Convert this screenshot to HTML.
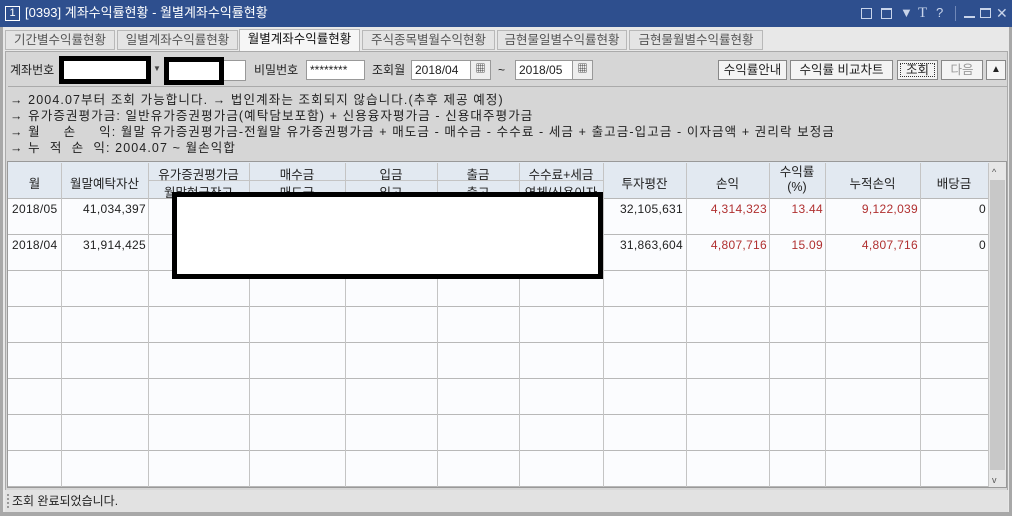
<!DOCTYPE html><html><head><meta charset="utf-8"><style>
*{margin:0;padding:0;box-sizing:border-box}
body{width:1012px;height:516px;overflow:hidden;background:#a8a8a8;font-family:"Liberation Sans","Noto Sans CJK KR",sans-serif;font-size:12px;color:#222;position:relative}
.a{position:absolute}
.t{white-space:nowrap;line-height:14px}
.ic{position:absolute;top:6px;color:#c8d4ea;font-size:13px;line-height:14px;white-space:nowrap}
.tab{position:absolute;top:30px;height:20px;border:1px solid #b8b8b8;background:#e4e4e4;color:#555;font-size:12.5px;text-align:center;line-height:18px}
.btn{position:absolute;top:60px;height:20px;border:1px solid #888;background:#f4f4f4;text-align:center;line-height:18px;font-size:12.5px}
.inp{position:absolute;top:60px;height:20px;border:1px solid #999;background:#fff;line-height:18px;padding-left:3px}
.vl{position:absolute;top:163px;width:1px;height:324px;background:#c4c4c4}
.hl{position:absolute;left:8px;width:981px;height:1px;background:#b8b8b8}
.h{position:absolute;text-align:center;font-size:12.5px;white-space:nowrap}
.n{position:absolute;text-align:right;white-space:nowrap;font-size:12px;letter-spacing:0.3px}
.r{color:#b03030}
</style></head><body>
<div class="a" style="left:0;top:0;width:1012px;height:27px;background:#2e4f8e"></div>
<div class="a" style="left:5px;top:6px;width:15px;height:15px;border:1px solid #fff;color:#fff;font-size:11px;text-align:center;line-height:13px">1</div>
<div class="a t" style="left:25px;top:6px;color:#fff;font-size:13px">[0393] 계좌수익률현황 - 월별계좌수익률현황</div>
<div class="a" style="left:861px;top:8px;width:11px;height:11px;border:1px solid #c8d4ea"></div>
<div class="a" style="left:881px;top:8px;width:11px;height:11px;border:1px solid #c8d4ea;border-top-width:2px"></div>
<div class="ic" style="left:900px">▼</div>
<div class="ic" style="left:918px;font-family:'Liberation Serif',serif;font-size:15px">T</div>
<div class="ic" style="left:936px">?</div>
<div class="a" style="left:955px;top:6px;width:1px;height:15px;background:#7088b8"></div>
<div class="a" style="left:964px;top:16px;width:11px;height:2px;background:#c8d4ea"></div>
<div class="a" style="left:980px;top:8px;width:11px;height:10px;border:1px solid #c8d4ea;border-top-width:2px"></div>
<div class="ic" style="left:996px;font-size:14px">✕</div>
<div class="a" style="left:3px;top:27px;width:1006px;height:485px;background:#e8e8e8"></div>
<div class="tab" style="left:5px;width:110px">기간별수익률현황</div>
<div class="tab" style="left:117px;width:121px">일별계좌수익률현황</div>
<div class="tab" style="left:239px;top:29px;height:22px;width:121px;background:#f6f6f6;color:#111;border-bottom:none">월별계좌수익률현황</div>
<div class="tab" style="left:362px;width:133px">주식종목별월수익현황</div>
<div class="tab" style="left:497px;width:130px">금현물일별수익률현황</div>
<div class="tab" style="left:629px;width:134px">금현물월별수익률현황</div>
<div class="a" style="left:5px;top:51px;width:1003px;height:440px;background:#d6d6d6;border:1px solid #aaa"></div>
<div class="a t" style="left:10px;top:63px">계좌번호</div>
<div class="a" style="left:59px;top:56px;width:92px;height:28px;background:#fff;border:5px solid #000"></div>
<div class="a t" style="left:153px;top:62px;font-size:8px;color:#444">▼</div>
<div class="a" style="left:164px;top:60px;width:82px;height:21px;background:#fff;border:1px solid #999"></div>
<div class="a" style="left:164px;top:57px;width:60px;height:28px;background:#fff;border:5px solid #000"></div>
<div class="a t" style="left:254px;top:63px">비밀번호</div>
<div class="inp" style="left:306px;width:59px">********</div>
<div class="a t" style="left:372px;top:63px">조회월</div>
<div class="inp" style="left:411px;width:80px">2018/04</div>
<div class="a" style="left:470px;top:61px;width:20px;height:18px;background:#eee;border-left:1px solid #999;text-align:center;font-size:10px;line-height:18px">▦</div>
<div class="a t" style="left:498px;top:63px">~</div>
<div class="inp" style="left:515px;width:78px">2018/05</div>
<div class="a" style="left:572px;top:61px;width:20px;height:18px;background:#eee;border-left:1px solid #999;text-align:center;font-size:10px;line-height:18px">▦</div>
<div class="btn" style="left:718px;width:69px">수익률안내</div>
<div class="btn" style="left:790px;width:103px">수익률 비교차트</div>
<div class="btn" style="left:897px;width:41px;outline:1px dotted #333;outline-offset:-4px">조회</div>
<div class="btn" style="left:941px;width:42px;color:#999">다음</div>
<div class="btn" style="left:986px;width:20px;font-size:10px">▲</div>
<div class="a" style="left:8px;top:86px;width:999px;height:1px;background:#aaa"></div>
<div class="a t" style="left:10px;top:92px;line-height:16px;font-size:12.5px;letter-spacing:1.1px">→ 2004.07부터 조회 가능합니다. → 법인계좌는 조회되지 않습니다.(추후 제공 예정)<br>→ 유가증권평가금: 일반유가증권평가금(예탁담보포함) + 신용융자평가금 - 신용대주평가금<br>→ 월&nbsp;&nbsp;&nbsp;&nbsp;&nbsp;손&nbsp;&nbsp;&nbsp;&nbsp;&nbsp;익: 월말 유가증권평가금-전월말 유가증권평가금 + 매도금 - 매수금 - 수수료 - 세금 + 출고금-입고금 - 이자금액 + 권리락 보정금<br>→ 누&nbsp;&nbsp;적&nbsp;&nbsp;손&nbsp;&nbsp;익: 2004.07 ~ 월손익합</div>
<div class="a" style="left:7px;top:161px;width:1000px;height:327px;background:#fbfcfe;border:1px solid #999"></div>
<div class="a" style="left:8px;top:162px;width:981px;height:36px;background:#e2e9f1"></div>
<div class="a" style="left:148px;top:180px;width:455px;height:1px;background:#c4c4c4"></div>
<div class="hl" style="top:198px"></div><div class="hl" style="top:234px"></div><div class="hl" style="top:270px"></div><div class="hl" style="top:306px"></div><div class="hl" style="top:342px"></div><div class="hl" style="top:378px"></div><div class="hl" style="top:414px"></div><div class="hl" style="top:450px"></div><div class="hl" style="top:486px"></div>
<div class="vl" style="left:61px"></div><div class="vl" style="left:148px"></div><div class="vl" style="left:249px"></div><div class="vl" style="left:345px"></div><div class="vl" style="left:437px"></div><div class="vl" style="left:519px"></div><div class="vl" style="left:603px"></div><div class="vl" style="left:686px"></div><div class="vl" style="left:769px"></div><div class="vl" style="left:825px"></div><div class="vl" style="left:920px"></div><div class="vl" style="left:988px"></div>
<div class="h" style="left:8px;width:53px;top:173px">월</div>
<div class="h" style="left:61px;width:87px;top:173px">월말예탁자산</div>
<div class="h" style="left:148px;width:101px;top:164px">유가증권평가금</div><div class="h" style="left:148px;width:101px;top:182px">월말현금잔고</div>
<div class="h" style="left:249px;width:96px;top:164px">매수금</div><div class="h" style="left:249px;width:96px;top:182px">매도금</div>
<div class="h" style="left:345px;width:92px;top:164px">입금</div><div class="h" style="left:345px;width:92px;top:182px">입고</div>
<div class="h" style="left:437px;width:82px;top:164px">출금</div><div class="h" style="left:437px;width:82px;top:182px">출고</div>
<div class="h" style="left:519px;width:84px;top:164px">수수료+세금</div><div class="h" style="left:519px;width:84px;top:182px">연체/신용이자</div>
<div class="h" style="left:603px;width:83px;top:173px">투자평잔</div>
<div class="h" style="left:686px;width:83px;top:173px">손익</div>
<div class="h" style="left:769px;width:56px;top:165px;line-height:15px">수익률<br>(%)</div>
<div class="h" style="left:825px;width:95px;top:173px">누적손익</div>
<div class="h" style="left:920px;width:68px;top:173px">배당금</div>
<div class="n" style="left:12px;top:202px">2018/05</div>
<div class="n" style="left:61px;width:85px;top:202px">41,034,397</div>
<div class="n" style="left:603px;width:80px;top:202px">32,105,631</div>
<div class="n r" style="left:686px;width:81px;top:202px">4,314,323</div>
<div class="n r" style="left:769px;width:54px;top:202px">13.44</div>
<div class="n r" style="left:825px;width:93px;top:202px">9,122,039</div>
<div class="n" style="left:920px;width:66px;top:202px">0</div>
<div class="n" style="left:12px;top:238px">2018/04</div>
<div class="n" style="left:61px;width:85px;top:238px">31,914,425</div>
<div class="n" style="left:603px;width:80px;top:238px">31,863,604</div>
<div class="n r" style="left:686px;width:81px;top:238px">4,807,716</div>
<div class="n r" style="left:769px;width:54px;top:238px">15.09</div>
<div class="n r" style="left:825px;width:93px;top:238px">4,807,716</div>
<div class="n" style="left:920px;width:66px;top:238px">0</div>
<div class="a" style="left:172px;top:192px;width:431px;height:87px;background:#fff;border:5px solid #000"></div>
<div class="a" style="left:989px;top:162px;width:17px;height:325px;background:#e6e6e6"></div>
<div class="a" style="left:990px;top:180px;width:15px;height:290px;background:#c8c8c8"></div>
<div class="a t" style="left:992px;top:165px;font-size:9px;color:#555">^</div>
<div class="a t" style="left:992px;top:473px;font-size:9px;color:#555">v</div>
<div class="a" style="left:5px;top:490px;width:1003px;height:22px;background:#e2e2e2"></div>
<div class="a" style="left:7px;top:494px;width:2px;height:14px;border-left:2px dotted #999"></div>
<div class="a t" style="left:12px;top:494px;font-size:12px">조회 완료되었습니다.</div>
</body></html>
